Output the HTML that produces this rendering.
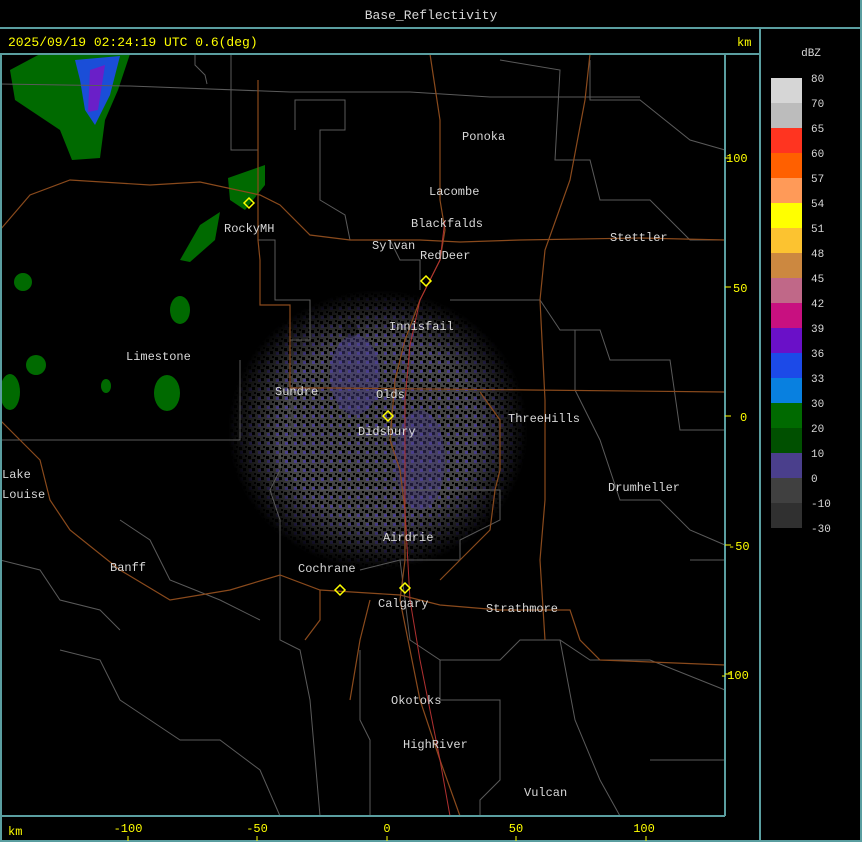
<!DOCTYPE html>
<html><head><meta charset="utf-8"><style>
html,body{margin:0;padding:0;background:#000;width:862px;height:842px;overflow:hidden}
svg{display:block}
text{font-family:"Liberation Mono","DejaVu Sans Mono",monospace;font-size:12px}
.l{fill:#d8d8d8}
.y{fill:#ffff00}
</style></head><body>
<svg width="862" height="842" viewBox="0 0 862 842" xmlns="http://www.w3.org/2000/svg">
<defs>
<pattern id="clut" width="9" height="9" patternUnits="userSpaceOnUse">
<rect width="9" height="9" fill="#444"/>
<rect x="0" y="0" width="3" height="3" fill="#000"/>
<rect x="5" y="6" width="3" height="3" fill="#000"/>
<rect x="6" y="1" width="3" height="3" fill="#4a3f8c"/>
<rect x="2" y="5" width="2" height="2" fill="#000"/>
</pattern>
<radialGradient id="fade" cx="50%" cy="50%" r="50%">
<stop offset="0.65" stop-color="#fff" stop-opacity="1"/>
<stop offset="1" stop-color="#fff" stop-opacity="0"/>
</radialGradient>
<mask id="m"><ellipse cx="378" cy="430" rx="150" ry="140" fill="url(#fade)"/></mask>
</defs>
<rect width="862" height="842" fill="#000"/>
<g mask="url(#m)"><rect x="220" y="285" width="320" height="295" fill="url(#clut)"/></g>
<ellipse cx="355" cy="375" rx="25" ry="40" fill="#4a3f8c" opacity="0.45"/>
<ellipse cx="420" cy="460" rx="25" ry="50" fill="#4a3f8c" opacity="0.4"/>
<ellipse cx="350" cy="330" rx="8" ry="8" fill="#000" opacity="0.3"/>
<!-- storms -->
<path d="M10 70 L40 54 L130 54 L118 90 L105 120 L100 158 L72 160 L60 130 L30 110 L15 100 Z" fill="#006a00"/>
<path d="M75 60 L120 56 L110 95 L95 125 L85 110 L80 80 Z" fill="#1a4ed8"/>
<path d="M90 70 L105 65 L98 110 L88 112 Z" fill="#6a1fc8"/>
<path d="M180 260 L200 225 L220 212 L215 240 L190 262 Z" fill="#006a00"/>
<path d="M228 178 L265 165 L265 185 L245 210 L230 200 Z" fill="#006a00"/>
<ellipse cx="180" cy="310" rx="10" ry="14" fill="#006a00"/>
<ellipse cx="167" cy="393" rx="13" ry="18" fill="#006a00"/>
<ellipse cx="23" cy="282" rx="9" ry="9" fill="#006a00"/>
<ellipse cx="36" cy="365" rx="10" ry="10" fill="#006a00"/>
<ellipse cx="10" cy="392" rx="10" ry="18" fill="#006a00"/>
<ellipse cx="106" cy="386" rx="5" ry="7" fill="#006a00"/>
<g stroke="#5a5a5a" fill="none" stroke-width="1">
<path d="M0 84 L130 86 L290 92 L410 92 L490 97 L640 97"/>
<path d="M195 55 L195 65 L205 75 L207 84"/>
<path d="M231 55 L231 150 L258 150 L258 240 L275 240 L275 300 L310 300 L310 340 L290 340 L290 440"/>
<path d="M295 130 L295 100 L345 100 L345 130 L320 130 L320 200 L345 215 L350 240 L390 240 L400 260 L420 260 L420 290"/>
<path d="M500 60 L560 70 L555 160 L590 160 L600 200 L650 200 L690 240 L725 240"/>
<path d="M590 60 L590 100 L640 100 L690 140 L725 150"/>
<path d="M450 300 L540 300 L560 330 L600 330 L610 360 L670 360 L680 430 L725 430"/>
<path d="M575 330 L575 390 L600 440 L620 500 L660 500 L690 530 L725 545"/>
<path d="M0 440 L240 440 L240 360"/>
<path d="M280 440 L280 470 L270 490 L280 520 L280 640 L300 650 L310 700 L320 816"/>
<path d="M320 490 L500 490 L500 520 L460 540 L460 560 L400 560 L360 570"/>
<path d="M400 560 L410 640 L440 660 L500 660 L520 640 L560 640 L590 660 L650 660 L725 690"/>
<path d="M360 650 L360 720 L370 740 L370 816"/>
<path d="M440 660 L440 700 L500 700 L500 780 L480 800 L480 816"/>
<path d="M560 640 L575 720 L600 780 L620 816"/>
<path d="M60 650 L100 660 L120 700 L150 720 L180 740 L220 740 L260 770 L280 816"/>
<path d="M0 560 L40 570 L60 600 L100 610 L120 630"/>
<path d="M120 520 L150 540 L170 580 L220 600 L260 620"/>
<path d="M690 560 L725 560"/>
<path d="M650 760 L725 760"/>
</g>
<g stroke="#8a4a1c" fill="none" stroke-width="1.2">
<path d="M0 230 L30 195 L70 180 L150 185 L200 182 L260 195 L280 205 L310 235 L350 240 L420 240 L460 242 L520 240 L640 238 L725 240"/>
<path d="M258 80 L258 240 L260 260 L260 305 L290 305 L290 388 L330 388 L530 390 L725 392"/>
<path d="M430 54 L440 120 L440 200 L445 230 L440 260 L420 300 L405 340 L395 380 L390 440 L400 470 L405 510 L405 560 L400 600 L410 650 L420 700 L440 760 L460 816"/>
<path d="M590 54 L585 100 L570 180 L545 250 L540 300 L545 400 L545 500 L540 560 L545 640"/>
<path d="M0 420 L40 460 L50 500 L70 530 L120 570 L170 600 L230 590 L280 575 L320 590 L400 595 L440 605 L500 610 L570 610 L580 640 L600 660 L725 665"/>
<path d="M480 392 L500 420 L500 470 L495 490 L490 530 L470 550 L440 580"/>
<path d="M320 590 L320 620 L305 640"/>
<path d="M350 700 L360 640 L370 600"/>
</g>
<g stroke="#b03030" fill="none" stroke-width="1">
<path d="M445 220 L440 260 L420 300 L410 345 L405 400 L405 510 L410 600 L420 660 L440 760 L450 816"/>
</g>
<g stroke="#5a9ea0" fill="none" stroke-width="2">
<line x1="0" y1="28" x2="862" y2="28"/>
<line x1="0" y1="54" x2="760" y2="54"/>
<line x1="725" y1="54" x2="725" y2="816"/>
<line x1="0" y1="816" x2="725" y2="816"/>
<line x1="760" y1="28" x2="760" y2="842"/>
<line x1="0" y1="841" x2="862" y2="841"/>
<line x1="1" y1="54" x2="1" y2="842"/>
<line x1="861" y1="0" x2="861" y2="842"/>
</g>
<g stroke="#ffff00" stroke-width="1">
<line x1="725" y1="158" x2="731" y2="158"/><line x1="725" y1="287" x2="731" y2="287"/><line x1="725" y1="416" x2="731" y2="416"/><line x1="725" y1="545" x2="731" y2="545"/><line x1="725" y1="674" x2="731" y2="674"/>
<line x1="128" y1="836" x2="128" y2="841"/><line x1="257" y1="836" x2="257" y2="841"/><line x1="387" y1="836" x2="387" y2="841"/><line x1="516" y1="836" x2="516" y2="841"/><line x1="646" y1="836" x2="646" y2="841"/>
</g>
<text class="l" x="431" y="19" text-anchor="middle" style="font-size:13px">Base_Reflectivity</text>
<text class="y" x="8" y="46" style="font-size:13px">2025/09/19 02:24:19 UTC 0.6(deg)</text>
<text class="y" x="737" y="46">km</text>
<text class="y" x="8" y="835">km</text>
<g class="y">
<text x="726" y="162">100</text><text x="733" y="292">50</text><text x="740" y="421">0</text><text x="728" y="550">-50</text><text x="720" y="679">-100</text>
<text x="128" y="832" text-anchor="middle">-100</text><text x="257" y="832" text-anchor="middle">-50</text><text x="387" y="832" text-anchor="middle">0</text><text x="516" y="832" text-anchor="middle">50</text><text x="644" y="832" text-anchor="middle">100</text>
</g>
<g stroke="#ffff00" fill="none" stroke-width="1.5">
<path d="M388 411 L393 416 L388 421 L383 416 Z"/>
<path d="M426 276 L431 281 L426 286 L421 281 Z"/>
<path d="M249 198 L254 203 L249 208 L244 203 Z"/>
<path d="M340 585 L345 590 L340 595 L335 590 Z"/>
<path d="M405 583 L410 588 L405 593 L400 588 Z"/>
</g>
<g class="l">
<text x="462" y="140">Ponoka</text>
<text x="429" y="195">Lacombe</text>
<text x="411" y="227">Blackfalds</text>
<text x="372" y="249">Sylvan</text>
<text x="420" y="259">RedDeer</text>
<text x="610" y="241">Stettler</text>
<text x="389" y="330">Innisfail</text>
<text x="126" y="360">Limestone</text>
<text x="275" y="395">Sundre</text>
<text x="376" y="398">Olds</text>
<text x="508" y="422">ThreeHills</text>
<text x="358" y="435">Didsbury</text>
<text x="2" y="478">Lake</text>
<text x="2" y="498">Louise</text>
<text x="608" y="491">Drumheller</text>
<text x="383" y="541">Airdrie</text>
<text x="110" y="571">Banff</text>
<text x="298" y="572">Cochrane</text>
<text x="378" y="607">Calgary</text>
<text x="486" y="612">Strathmore</text>
<text x="391" y="704">Okotoks</text>
<text x="403" y="748">HighRiver</text>
<text x="524" y="796">Vulcan</text>
<text x="224" y="232">RockyMH</text>
</g>
<text class="l" x="811" y="56" text-anchor="middle" style="font-size:11px">dBZ</text>
<g>
<rect x="771" y="78" width="31" height="25" fill="#d6d6d6"/>
<rect x="771" y="103" width="31" height="25" fill="#bcbcbc"/>
<rect x="771" y="128" width="31" height="25" fill="#ff3420"/>
<rect x="771" y="153" width="31" height="25" fill="#ff6000"/>
<rect x="771" y="178" width="31" height="25" fill="#ff9a58"/>
<rect x="771" y="203" width="31" height="25" fill="#ffff00"/>
<rect x="771" y="228" width="31" height="25" fill="#fcc330"/>
<rect x="771" y="253" width="31" height="25" fill="#cc8840"/>
<rect x="771" y="278" width="31" height="25" fill="#c06888"/>
<rect x="771" y="303" width="31" height="25" fill="#c81080"/>
<rect x="771" y="328" width="31" height="25" fill="#6a10c8"/>
<rect x="771" y="353" width="31" height="25" fill="#1c4ae8"/>
<rect x="771" y="378" width="31" height="25" fill="#0880e0"/>
<rect x="771" y="403" width="31" height="25" fill="#006a00"/>
<rect x="771" y="428" width="31" height="25" fill="#005000"/>
<rect x="771" y="453" width="31" height="25" fill="#4a3f8c"/>
<rect x="771" y="478" width="31" height="25" fill="#404040"/>
<rect x="771" y="503" width="31" height="25" fill="#303030"/>
</g>
<g class="l">
<text x="811" y="82" style="font-size:11px">80</text><text x="811" y="107" style="font-size:11px">70</text><text x="811" y="132" style="font-size:11px">65</text><text x="811" y="157" style="font-size:11px">60</text><text x="811" y="182" style="font-size:11px">57</text><text x="811" y="207" style="font-size:11px">54</text><text x="811" y="232" style="font-size:11px">51</text><text x="811" y="257" style="font-size:11px">48</text><text x="811" y="282" style="font-size:11px">45</text><text x="811" y="307" style="font-size:11px">42</text><text x="811" y="332" style="font-size:11px">39</text><text x="811" y="357" style="font-size:11px">36</text><text x="811" y="382" style="font-size:11px">33</text><text x="811" y="407" style="font-size:11px">30</text><text x="811" y="432" style="font-size:11px">20</text><text x="811" y="457" style="font-size:11px">10</text><text x="811" y="482" style="font-size:11px">0</text><text x="811" y="507" style="font-size:11px">-10</text><text x="811" y="532" style="font-size:11px">-30</text>
</g>
</svg>
</body></html>
